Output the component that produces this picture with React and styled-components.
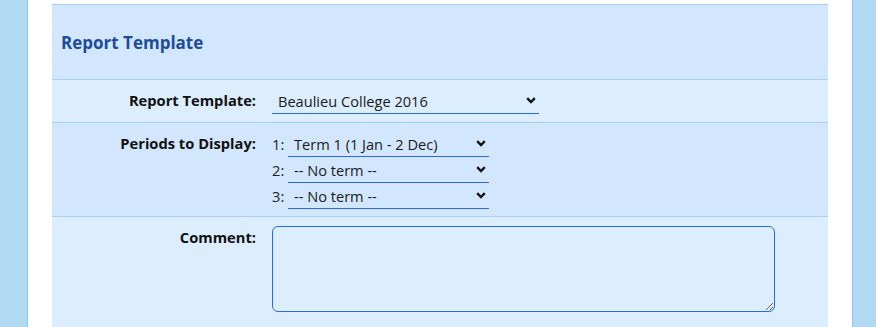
import styled, { createGlobalStyle } from "styled-components";

const GlobalStyle = createGlobalStyle`
  html, body {
    margin: 0;
    padding: 0;
    background: #ffffff;
    font-family: "Open Sans", "Liberation Sans", sans-serif;
  }
`;

const Page = styled.div`
  display: flex;
  height: 327px;
  overflow: hidden;
`;

const SideBar = styled.div`
  width: ${(p) => p.$w}px;
  flex-shrink: 0;
  box-sizing: border-box;
  background-color: #b2d9f2;
  border-left: ${(p) => (p.$side === "right" ? "1px solid #8ec3ef" : "none")};
  border-right: ${(p) => (p.$side === "left" ? "1px solid #8ec3ef" : "none")};
`;

const Main = styled.div`
  flex: 1;
  margin: 0 24px;
  padding-top: 4px;
`;

const Panel = styled.div`
  border-top: 1px solid #a6cff8;
`;

const Header = styled.div`
  height: 74px;
  display: flex;
  align-items: center;
  padding-left: 9px;
  background-color: #d2e7fd;
  border-bottom: 1px solid #a6cff8;
`;

const Title = styled.h2`
  margin: 0;
  font-size: 17px;
  font-weight: 700;
  color: #1e4b9b;
`;

const Row = styled.div`
  display: grid;
  grid-template-columns: 204px 1fr;
  column-gap: 16px;
  padding: ${(p) => p.$pad || "8px 0"};
  background-color: ${(p) => (p.$alt ? "#d2e7fd" : "#dcedfd")};
  border-bottom: 1px solid #a6cff8;
`;

const Label = styled.label`
  text-align: right;
  font-size: 14.7px;
  font-weight: 700;
  color: #111;
  padding-top: ${(p) => p.$top || 2}px;
`;

const Controls = styled.div`
  display: flex;
  flex-direction: column;
`;

const PeriodLine = styled.div`
  display: flex;
  align-items: center;
`;

const Num = styled.span`
  width: 16px;
  font-size: 14.7px;
  color: #222;
`;

const SelectWrap = styled.div`
  position: relative;
  width: ${(p) => p.$w}px;
  height: 26px;
  border-bottom: 1px solid #2a6ae2;
  box-sizing: border-box;
`;

const Select = styled.select`
  appearance: none;
  width: 100%;
  height: 100%;
  border: none;
  background: transparent;
  padding: 0 0 0 6px;
  font-family: "Open Sans", "Liberation Sans", sans-serif;
  font-size: 14.6px;
  color: #1a1a1a;
  outline: none;
`;

const Chevron = styled.svg`
  position: absolute;
  right: 3px;
  top: 9px;
  pointer-events: none;
`;

const TextArea = styled.textarea`
  width: 503px;
  height: 86px;
  box-sizing: border-box;
  border: 1px solid #2a6ae2;
  border-radius: 6px;
  background: #dcedfd;
  font-family: "Open Sans", "Liberation Sans", sans-serif;
  font-size: 14px;
  resize: both;
  outline: none;
`;

const Dropdown = ({ width, value }) => (
  <SelectWrap $w={width}>
    <Select defaultValue={value}>
      <option>{value}</option>
    </Select>
    <Chevron width="10" height="7" viewBox="0 0 10 7">
      <polyline
        points="1.2,1.2 5,5 8.8,1.2"
        fill="none"
        stroke="#111"
        strokeWidth="2.4"
      />
    </Chevron>
  </SelectWrap>
);

const periods = ["Term 1 (1 Jan - 2 Dec)", "-- No term --", "-- No term --"];

export default function App() {
  return (
    <>
      <GlobalStyle />
      <Page>
        <SideBar $w={28} $side="left" />
        <Main>
          <Panel>
            <Header>
              <Title>Report Template</Title>
            </Header>
            <Row>
              <Label>Report Template:</Label>
              <Dropdown width={267} value="Beaulieu College 2016" />
            </Row>
            <Row $alt $pad="8px 0 7px">
              <Label $top={2}>Periods to Display:</Label>
              <Controls>
                {periods.map((p, i) => (
                  <PeriodLine key={i}>
                    <Num>{i + 1}:</Num>
                    <Dropdown width={201} value={p} />
                  </PeriodLine>
                ))}
              </Controls>
            </Row>
            <Row $pad="9px 0 10px">
              <Label $top={1}>Comment:</Label>
              <div>
                <TextArea />
              </div>
            </Row>
            <Row $alt />
          </Panel>
        </Main>
        <SideBar $w={24} $side="right" />
      </Page>
    </>
  );
}
